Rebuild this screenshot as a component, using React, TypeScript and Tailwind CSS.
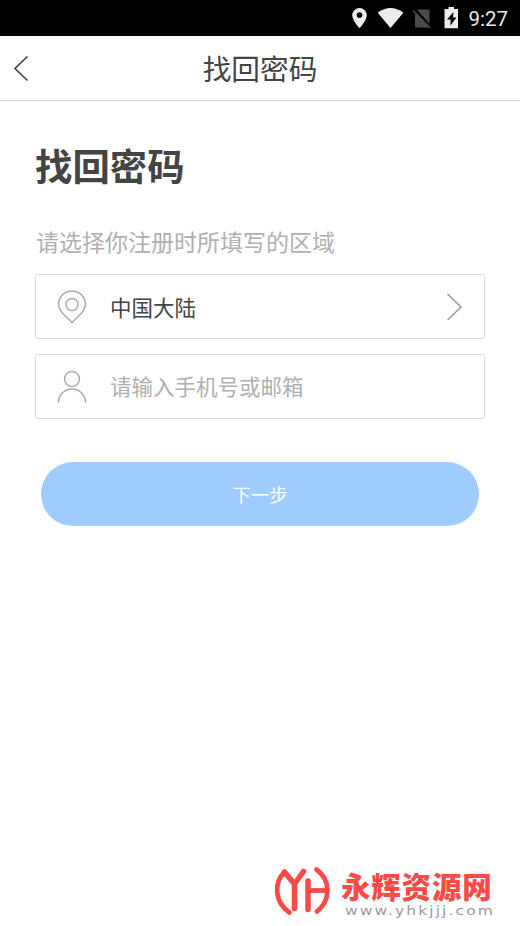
import React from 'react';

const cjk = "font-['Noto_Sans_CJK_SC',sans-serif]";

function StatusBar() {
  return (
    <div className="flex h-9 items-center justify-end bg-black pr-3 font-['Roboto',sans-serif] text-[#e8e8e8]">
      <svg className="h-9 w-[110px]" viewBox="351 0 110 36" fill="#ececec">
        <path fillRule="evenodd" d="M359.500 8a7.300 7.300 0 0 0-7.300 7.300c0 5.400 7.300 12.900 7.300 12.900s7.300-7.500 7.300-12.900a7.300 7.300 0 0 0-7.300-7.300zm0 4.300a2.800 2.800 0 1 1 0 5.600a2.800 2.800 0 0 1 0-5.600z" />
        <path d="M377.700 12.700Q390.500 3.500 403.400 12.700L390.500 28z" />
        <path fill="#4a4a4a" d="M417 9.500H429.500V24zM415 12v15.500h14.500z" />
        <path d="M413 10.500L430.500 28" stroke="#4a4a4a" strokeWidth="1.500" />
        <path fillRule="evenodd" d="M448.500 7h5.500v2h4v19.300h-13.500V9h4zM453.500 12l-6.500 7.500h3.500v6l6-8h-3.500z" />
      </svg>
      <span className="mt-px ml-[7px] text-[20.500px] leading-9">9:27</span>
    </div>
  );
}

function Watermark() {
  return (
    <footer className="mt-auto mb-[6px] flex items-start pl-[272px]">
      <svg className="h-[58px] w-[62px]" viewBox="0 0 62 58" fill="none" stroke="#f94a48" strokeLinecap="round">
        <path strokeWidth="4.800" d="M12.500 10C1.500 21 2.500 40 17.500 50.500M44.500 7.500C59 18 59 38 45 49.500" />
        <path strokeWidth="5.500" d="M12.500 10L22.500 22L31.500 9.500M22.500 22V46.500M36 19V47.500" />
        <path strokeWidth="4.800" d="M37 28.500H54" strokeLinecap="butt" />
      </svg>
      <div className="pt-[8px] pl-[7px]">
        <div className={`${cjk} text-[29.500px] leading-[31px] font-black tracking-[0.800px] whitespace-nowrap text-[#f94a48]`}>永辉资源网</div>
        <div className="mt-[3px] ml-1 w-fit origin-left scale-x-[1.240] font-['DejaVu_Sans',sans-serif] text-[12.500px] leading-[13px] tracking-[1.700px] whitespace-nowrap text-[#999]">www.yhkjjj.com</div>
      </div>
    </footer>
  );
}

export default function App() {
  return (
    <div className={`flex h-[926px] w-[520px] flex-col overflow-hidden bg-white ${cjk} text-[#444]`}>
      <StatusBar />
      <header className="grid h-[65px] grid-cols-[60px_1fr_60px] items-center border-b border-[#d8d8d8]">
        <svg className="ml-3 h-7 w-5" viewBox="0 0 20 28" fill="none" stroke="#444" strokeWidth="1.700">
          <path d="M15.500 2.500L3 14.500L15.500 26.500" />
        </svg>
        <h1 className="text-center text-[28.700px] leading-[64px]">找回密码</h1>
      </header>
      <main className="px-[35px]">
        <h2 className="mt-[37px] text-[37.400px] leading-[54px] font-bold">找回密码</h2>
        <p className="mt-[32px] ml-px text-[23px] leading-[34px] text-[#b0b0b0]">请选择你注册时所填写的区域</p>
        <div className="mt-[16px] flex h-[65px] items-center rounded-[3px] border-[1.500px] border-[#dcdcdc] pl-[20px] text-[21.500px]">
          <svg className="h-9 w-8" viewBox="0 0 32 36" fill="none" stroke="#aaa" strokeWidth="1.500">
            <path d="M16 33.500C12 29 2.500 23 2.500 15.500a13.500 13.500 0 0 1 27 0C29.500 23 20 29 16 33.500z" />
            <circle cx="16" cy="15.500" r="6" />
          </svg>
          <span className="mt-[2px] ml-[22px]">中国大陆</span>
          <svg className="mr-[21px] ml-auto h-7 w-[18px]" viewBox="0 0 18 28" fill="none" stroke="#999" strokeWidth="1.500">
            <path d="M2.500 1L16 14L2.500 27" />
          </svg>
        </div>
        <div className="mt-[15px] flex h-[65px] items-center rounded-[3px] border-[1.500px] border-[#dcdcdc] pl-[20px] text-[21.500px]">
          <svg className="h-9 w-8" viewBox="0 0 32 36" fill="none" stroke="#aaa" strokeWidth="1.500">
            <circle cx="16" cy="10" r="7.500" />
            <path d="M2.500 33.500a13.500 13.500 0 0 1 27 0" />
          </svg>
          <span className="ml-[22px] text-[#b0b0b0]">请输入手机号或邮箱</span>
        </div>
        <button className="mx-[6px] mt-[43px] block h-16 w-[438px] rounded-full bg-[#9fccfe] pt-[2px] text-[18.500px] text-white">下一步</button>
      </main>
      <Watermark />
    </div>
  );
}
